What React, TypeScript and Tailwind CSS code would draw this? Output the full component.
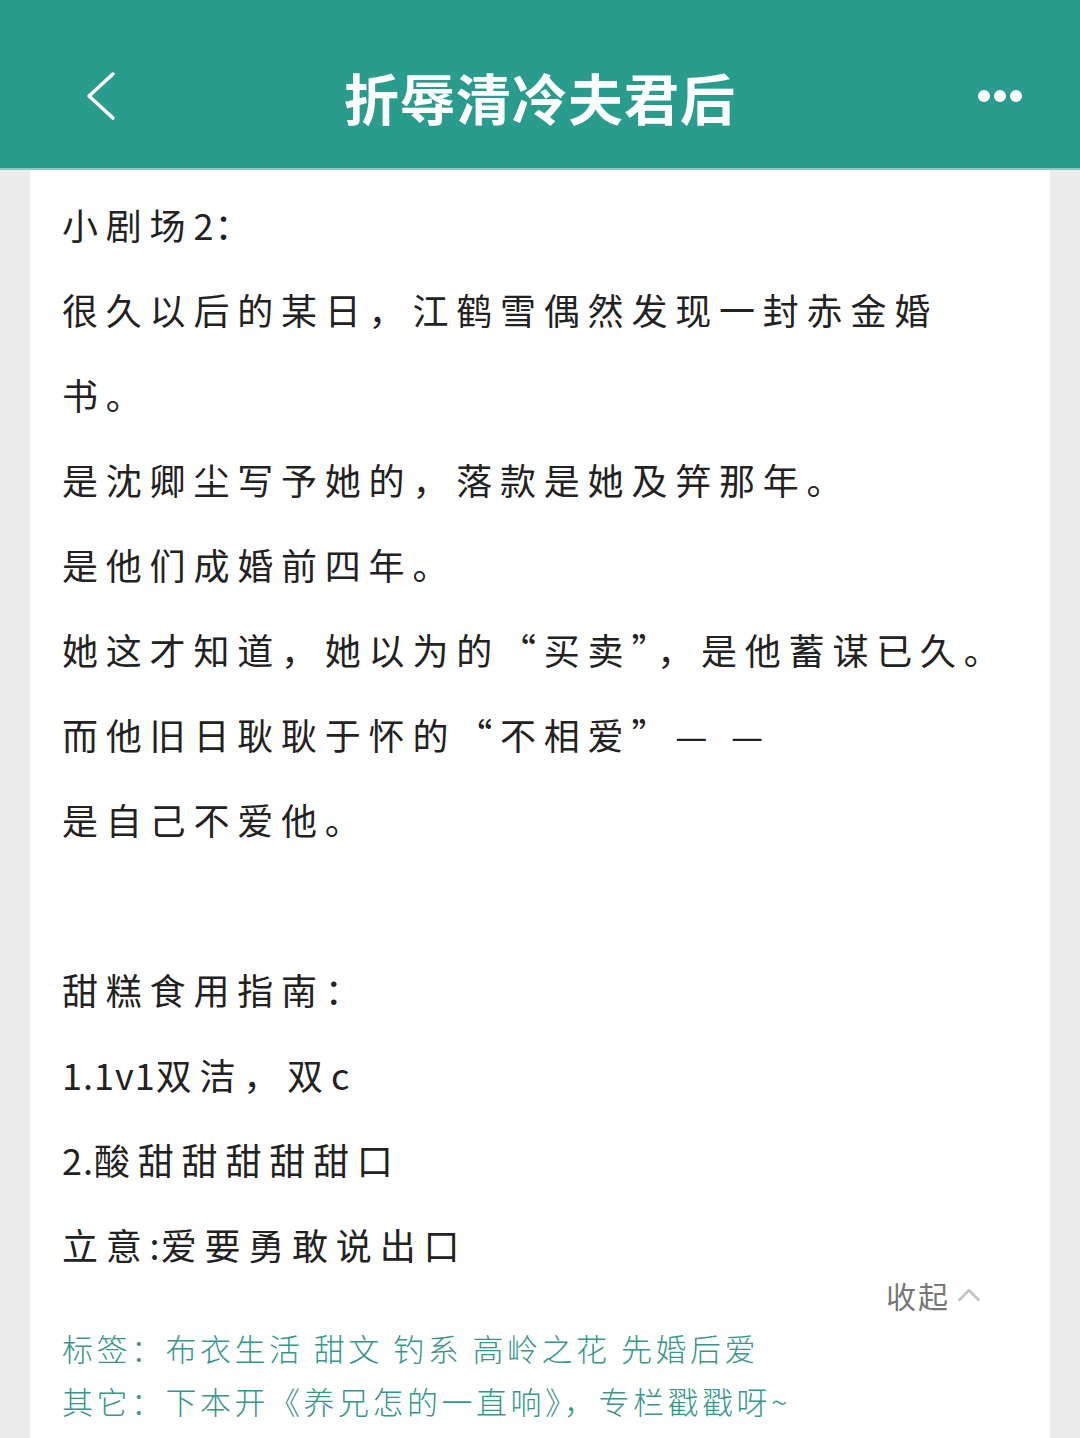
import React from 'react';
import { ChevronUp, Copy } from 'lucide-react';

const body = [
  '小剧场2：',
  '很久以后的某日，江鹤雪偶然发现一封赤金婚',
  '书。',
  '是沈卿尘写予她的，落款是她及笄那年。',
  '是他们成婚前四年。',
  '她这才知道，她以为的“买卖”，是他蓄谋已久。',
  '而他旧日耿耿于怀的“不相爱”— —',
  '是自己不爱他。',
  '',
  '甜糕食用指南：',
  '1.1v1双洁，双c',
  '2.酸甜甜甜甜甜口',
  '立意:爱要勇敢说出口',
];

// latin runs get tighter spacing than the han characters around them
const Line = ({ text }: { text: string }) => {
  const parts = text.split(/([A-Za-z0-9.:]+)/);
  return (
    <>
      {parts.map((p, i) =>
        /^[A-Za-z0-9.:]+$/.test(p) ? (
          <span key={i} className="tracking-[1px]">
            {p}
          </span>
        ) : (
          <span key={i}>{p}</span>
        )
      )}
    </>
  );
};

const App = () => {
  return (
    <div
      className="h-[1438px] overflow-hidden bg-[#ebebeb]"
      style={{ fontFamily: '"Noto Sans CJK SC", "Noto Sans", sans-serif' }}
    >
      {/* top bar */}
      <header className="h-[170px] bg-[#2a9c8e] border-b-2 border-[#8ccac1] grid grid-cols-[200px_1fr_200px] items-center pt-[24px] text-white">
        <div className="pl-[86px]">
          <svg width="30" height="50" viewBox="0 0 30 50" fill="none" stroke="white" strokeWidth="3.5" strokeLinecap="round" strokeLinejoin="round">
            <polyline points="27,3 3,25 27,47" />
          </svg>
        </div>
        <h1 className="text-[55px] font-bold tracking-[1px] leading-none text-center">折辱清冷夫君后</h1>
        <div className="flex justify-end gap-[4px] pr-[58px]">
          <span className="w-[12px] h-[12px] rounded-full bg-white" />
          <span className="w-[12px] h-[12px] rounded-full bg-white" />
          <span className="w-[12px] h-[12px] rounded-full bg-white" />
        </div>
      </header>

      <main className="mx-[30px] bg-white pl-[32px] pr-[40px] pt-[12px]">
        <div className="text-[36px] leading-[85px] tracking-[7.8px] text-[#222]">
          {body.map((line, i) => (
            <div key={i} className="whitespace-nowrap h-[85px]">
              <Line text={line} />
            </div>
          ))}
        </div>

        <div className="flex justify-end items-center h-[52px] -mt-[18px] pr-[22px] text-[#777] text-[30px] tracking-[2px]">
          <span>收起</span>
          <ChevronUp className="w-[38px] h-[38px] text-[#c4c4c4]" strokeWidth={1.8} />
        </div>

        <div className="text-[#37968a] text-[31px] leading-[53px] tracking-[3.5px] font-light">
          <div className="whitespace-nowrap">标签：布衣生活 甜文 钓系 高岭之花 先婚后爱</div>
          <div className="whitespace-nowrap">其它：下本开《养兄怎的一直响》，专栏戳戳呀~</div>
          <div className="whitespace-nowrap flex items-center gap-[10px]">
            <span>ID：&nbsp;&nbsp;&nbsp;8784705</span>
            <Copy className="w-[30px] h-[30px]" strokeWidth={2} />
          </div>
        </div>
      </main>
    </div>
  );
};

export default App;
